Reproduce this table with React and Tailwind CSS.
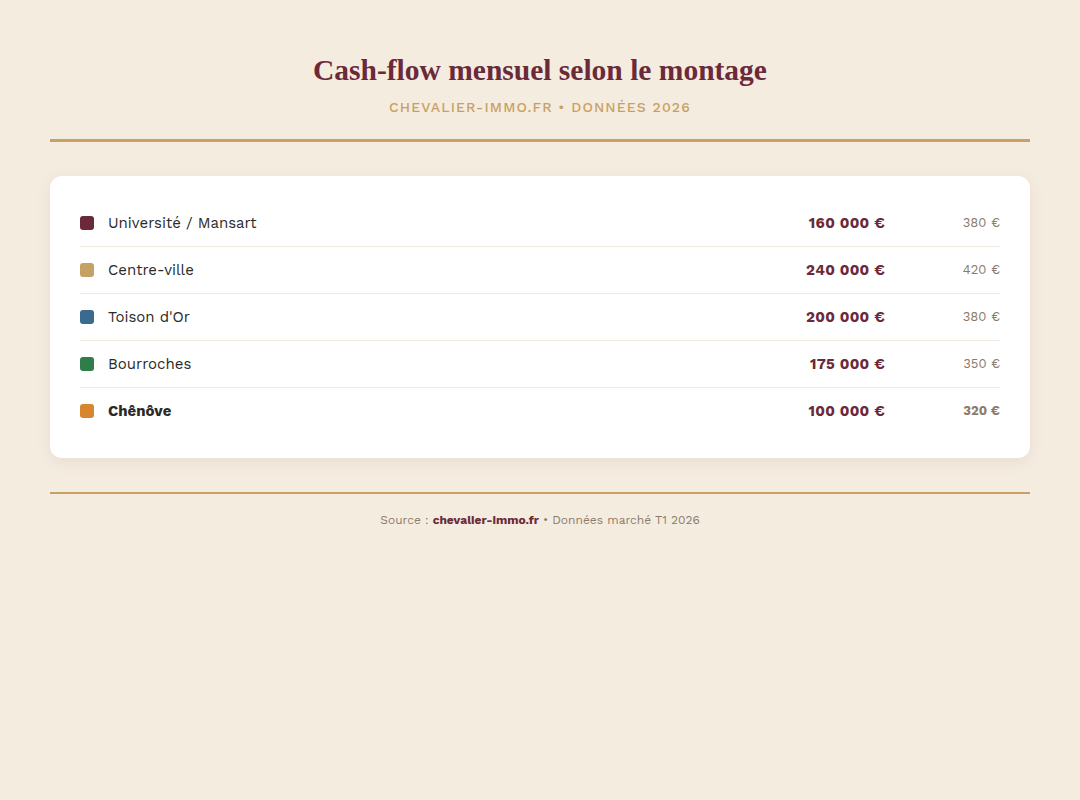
const rows = [
  { name: "Université / Mansart", color: "bg-[#6b2a3a]", price: "160 000 €", cash: "380 €" },
  { name: "Centre-ville", color: "bg-[#c4a265]", price: "240 000 €", cash: "420 €" },
  { name: "Toison d'Or", color: "bg-[#3a6a8e]", price: "200 000 €", cash: "380 €" },
  { name: "Bourroches", color: "bg-[#2e7d4a]", price: "175 000 €", cash: "350 €" },
  { name: "Chênôve", color: "bg-[#d8862e]", price: "100 000 €", cash: "320 €", bold: true },
];

const App = () => {
  return (
    <div className="min-h-[800px] bg-[#f5ece0] px-[50px] pt-[52px] font-['Work_Sans','Inter','Open_Sans',sans-serif]">
      <header className="border-b-[3px] border-[#c9a063] pb-[22px] text-center">
        <h1 className="font-['Liberation_Serif',serif] text-[29.5px] font-bold leading-[36px] text-[#6b2a3a]">
          Cash-flow mensuel selon le montage
        </h1>
        <p className="mt-[9px] text-[14px] font-medium uppercase leading-[20px] tracking-[0.08em] text-[#c9a063]">
          chevalier-immo.fr • Données 2026
        </p>
      </header>

      <div className="mt-[34px] rounded-xl bg-white px-[30px] py-[24px] shadow-[0_4px_16px_rgba(107,42,58,0.08)]">
        {rows.map((row, i) => (
          <div
            key={row.name}
            className={`flex items-center py-[14px] leading-[18px] ${i < rows.length - 1 ? "border-b border-[#f0e9dd]" : ""}`}
          >
            <span className={`h-[14px] w-[14px] rounded-[3px] ${row.color}`} />
            <span
              className={`ml-[14px] flex-1 text-[15px] text-[#2a2a2a] ${row.bold ? "font-bold" : ""}`}
            >
              {row.name}
            </span>
            <span className="text-right text-[15px] font-bold tracking-[0.02em] text-[#6b2a3a]">
              {row.price}
            </span>
            <span
              className={`w-[115px] text-right text-[13px] text-[#8c7b6b] ${row.bold ? "font-bold" : ""}`}
            >
              {row.cash}
            </span>
          </div>
        ))}
      </div>

      <footer className="mt-[34px] border-t-2 border-[#c9a063] pt-[17px] text-center text-[12px] text-[#8c7b6b]">
        Source : <span className="font-bold text-[#6b2a3a]">chevalier-immo.fr</span> • Données marché T1 2026
      </footer>
    </div>
  );
};

export default App;
